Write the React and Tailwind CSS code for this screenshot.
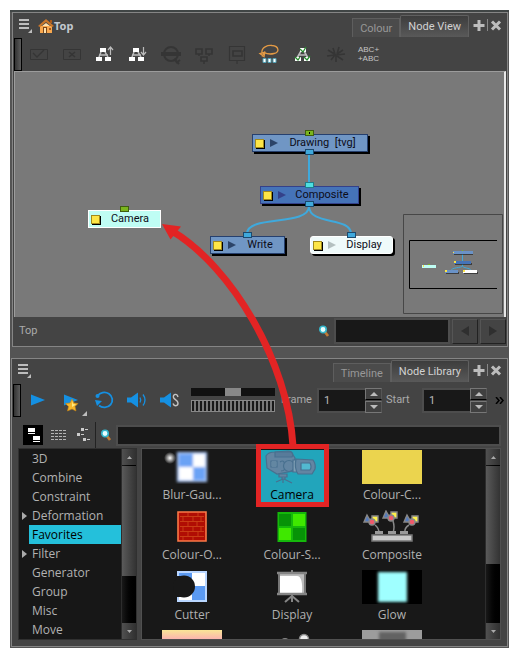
import React, { useState } from 'react';

const categories = [
    { name: '3D' },
    { name: 'Combine' },
    { name: 'Constraint' },
    { name: 'Deformation', nested: true },
    { name: 'Favorites' },
    { name: 'Filter', nested: true },
    { name: 'Generator' },
    { name: 'Group' },
    { name: 'Misc' },
    { name: 'Move' },
];

const graphNodes = [
    { name: 'Drawing  [tvg]', place: 'left-[237px] top-[62px] w-[116px]', look: 'bg-[#7096c4] border-[#26406e] shadow-[2px_2px_0_#000]', arrow: 'text-[#2c4468]', top: 'bg-[#7ab51d] border-[#3f5e10]', dot: true, bottom: true },
    { name: 'Composite', place: 'left-[245px] top-[114px] w-[99px]', look: 'bg-[#4573b8] border-[#34418a] shadow-[2px_2px_0_#000]', arrow: 'text-[#34418a]', top: 'bg-[#4fe0e0] border-[#1f7f8c]', bottom: true },
    { name: 'Write', place: 'left-[195px] top-[164px] w-[75px]', look: 'bg-[#7096c4] border-[#26406e] shadow-[2px_2px_0_#000]', arrow: 'text-[#2c4468]', top: 'bg-[#3fa9dc] border-[#1c4a6e]' },
    { name: 'Display', place: 'left-[295px] top-[164px] w-[83px]', look: 'bg-[#effafa] border-white rounded-[3px] shadow-[2px_2px_0_#000]', arrow: 'text-[#b4c0c0]', top: 'bg-[#3fa9dc] border-[#1c4a6e]' },
    { name: 'Camera', place: 'left-[73px] top-[138px] w-[73px]', look: 'bg-[#bffdf4] border-white', top: 'bg-[#7ab51d] border-[#3f5e10]' },
];

function MenuButton() {
    return (
        <button aria-label="View menu" className="w-4 h-4">
            <svg viewBox="0 0 16 16" className="w-4 h-4">
                <path d="M1 2h10M1 6h10M1 10h10" stroke="#bdbdbd" strokeWidth="2" />
                <path d="M14 11v4h-4z" fill="#bdbdbd" />
            </svg>
        </button>
    );
}

function Tabs({ back, front }) {
    return (
        <div className="ml-auto flex items-end self-stretch">
            <button className="h-[19px] px-[7px] bg-[#4b4b4b] border border-b-0 border-[#5e5e5e] text-[#989898] leading-[19px]">{back}</button>
            <button className="h-[22px] px-[7px] bg-linear-to-b from-[#3d3d3d] to-[#595959] border border-b-0 border-[#606060] rounded-t-[2px] text-[#d2d2d2] leading-[20px]">{front}</button>
            <button aria-label="Add view" className="ml-1 mb-1 w-3 h-4">
                <svg viewBox="0 0 12 16" className="w-3 h-4"><path d="M6 3v11M0.5 8.5h11" stroke="#bdbdbd" strokeWidth="3" /></svg>
            </button>
            <span className="w-px h-3 mb-[6px] ml-[2px] bg-[#888]" />
            <button aria-label="Close view" className="ml-[2px] mb-1 mr-1 w-3 h-4">
                <svg viewBox="0 0 12 16" className="w-3 h-4"><path d="M2 4.5l8 8M10 4.5l-8 8" stroke="#bdbdbd" strokeWidth="3" /></svg>
            </button>
        </div>
    );
}

function Handle() {
    return <div className="w-2 h-[33px] shrink-0 border border-black bg-linear-to-r from-[#333] to-[#5c5c5c]" />;
}

function Tool({ label, children }) {
    return (
        <button aria-label={label} className="w-[33px] h-[33px] shrink-0 flex items-center justify-center">
            <svg viewBox="0 0 24 24" width="24" height="24" fill="none">{children}</svg>
        </button>
    );
}

function Magnifier() {
    return (
        <svg viewBox="0 0 12 12" className="w-3 h-3 shrink-0">
            <path d="M7 7l3 4" stroke="#c07a35" strokeWidth="2.6" />
            <circle cx="5" cy="4.5" r="3.2" fill="#e9ffff" stroke="#35b7cc" strokeWidth="1.6" />
        </svg>
    );
}

function TreeBoxes() {
    return (
        <>
            <path d="M8 10l-2 5M12 10l3 5M6 13h9" stroke="#bbb" strokeWidth="1.5" />
            <path d="M7 6h6v4H7zM3 15h6v4H3zM12 15h6v4h-6z" fill="#fff" />
        </>
    );
}

function NodeToolbar() {
    return (
        <div className="flex items-center h-[34px]">
            <Handle />
            <Tool label="Enable">
                <path d="M3.5 7.5h17v10h-17z" stroke="#353535" />
                <path d="M6 11l4 4 7-7" stroke="#353535" strokeWidth="1.3" />
            </Tool>
            <Tool label="Disable">
                <path d="M3.5 7.5h17v10h-17z" stroke="#353535" />
                <path d="M9 10l6 5M15 10l-6 5" stroke="#353535" strokeWidth="1.6" />
            </Tool>
            <Tool label="Move up to parent">
                <TreeBoxes />
                <path d="M17.5 13V5M15 8l2.5-3 2.5 3" stroke="#bbb" strokeWidth="1.2" />
            </Tool>
            <Tool label="Enter group">
                <TreeBoxes />
                <path d="M17.5 5v8M15 10l2.5 3 2.5-3" stroke="#bbb" strokeWidth="1.2" />
            </Tool>
            <Tool label="Search">
                <circle cx="12" cy="12" r="7" stroke="#353535" strokeWidth="2" />
                <path d="M2 12h20" stroke="#353535" strokeWidth="4" />
                <path d="M15 17l5 5M17 21l4-3" stroke="#353535" strokeWidth="2" />
            </Tool>
            <Tool label="Group">
                <path d="M4 7h6v5H4zM14 7h6v5h-6zM9 15h6v4H9z" stroke="#353535" strokeWidth="1.6" />
                <path d="M7 12v2M17 12v2M12 19v3" stroke="#353535" strokeWidth="1.5" />
            </Tool>
            <Tool label="Backdrop">
                <path d="M4.5 4.5h15v14h-15zM12 18v4" stroke="#353535" strokeWidth="1.2" />
                <path d="M8 9h9v5H8z" stroke="#353535" strokeWidth="1.6" />
            </Tool>
            <Tool label="Lasso">
                <path d="M4 11C3 5 10 3 14 3.5c7 .5 8 7 2 8-4 1-8 0-10-1l-4 1 4 3 1-5-3 5" stroke="#e39a45" strokeWidth="1.3" />
                <path d="M5 16.5h3v4H5zM10 16.5h3v4h-3zM15 16.5h3v4h-3z" fill="#fff" stroke="#52a1b4" />
            </Tool>
            <Tool label="Enable all">
                <path d="M10 9l-4 7M13 9l4 7M7 13h9" stroke="#bbb" strokeWidth="1.6" />
                <path d="M9 6h6v4H9zM4 15h6v4H4zM13 15h6v4h-6z" fill="#fff" />
                <path d="M9 7l3 3 3-5M4 15l3 3 2-3M13 15l3 3 3-4" stroke="#268b2d" strokeWidth="1.3" />
            </Tool>
            <Tool label="Explode">
                <path d="M12 13L4 8M11 12L9 6M13 12l2-7M13 12l6-4M12 13l9-1M13 14l6 4M12 13v7M11 13l-4 5M11 13l-8 1" stroke="#353535" strokeWidth="1.6" />
            </Tool>
            <button className="w-[33px] shrink-0 text-[8px] leading-[9px] text-[#c4c4c4] font-['Liberation_Sans',sans-serif]">ABC+<br />+ABC</button>
        </div>
    );
}

function GraphNode({ node }) {
    return (
        <div className={`absolute h-[18px] border flex items-center leading-4 text-[#0d0d18] whitespace-pre ${node.place} ${node.look}`}>
            <span className={`absolute -top-[5px] left-1/2 -ml-[5px] w-[9px] h-[6px] border ${node.top}`}>
                {node.dot && <span className="absolute left-[3px] top-px w-px h-[2px] bg-black" />}
            </span>
            <span className="ml-[2px] w-[9px] h-[9px] shrink-0 bg-[#fde647] border border-[#a28a1c] shadow-[1px_1px_0_#000]" />
            {node.arrow && (
                <svg viewBox="0 0 8 8" className={`w-2 h-2 ml-[6px] shrink-0 ${node.arrow}`}><path d="M0 0l8 4-8 4z" fill="currentColor" /></svg>
            )}
            <span className="flex-1 text-center">{node.name}</span>
            {node.bottom && <span className="absolute -bottom-[4px] left-1/2 -ml-[5px] w-[9px] h-[6px] border bg-[#3fa9dc] border-[#1c4a6e]" />}
        </div>
    );
}

function MiniMap() {
    return (
        <svg viewBox="0 0 100 100" className="absolute right-[1px] bottom-[3px] w-[100px] h-[100px]" fill="none">
            <path d="M0.5 0.5h99v99h-99z" stroke="#474747" />
            <path d="M94 26.5H6.5v48H94" stroke="#000" />
            <path d="M59.5 40v12C59 54 48 53 48 57M59.5 52c0 2 8 2 8 4" stroke="#3fa9dc" />
            <path d="M51 40h19M52 50h17M43 59h13M61 59h14" stroke="#000" />
            <path d="M50 37h20v3H50zM42 56h13v3H42z" fill="#6a92c6" />
            <path d="M51 47h17v3H51z" fill="#4573b8" />
            <path d="M60 56h14v3H60z" fill="#fff" />
            <path d="M19 51h14v3H19z" fill="#bffdf4" />
            <path d="M51 47h2v2h-2zM42 56h2v2h-2zM60 56h2v2h-2zM20 51h1v2h-1zM50 38h1v1h-1z" fill="#fde647" />
            <path d="M25 50h2v1h-2zM59 36h1v1h-1z" fill="#7ab51d" />
        </svg>
    );
}

function NodeView() {
    return (
        <section className="mr-px border border-[#858585] bg-[#444] p-px">
            <div className="flex items-center h-[23px] pl-1">
                <MenuButton />
                <svg viewBox="0 0 16 16" className="w-4 h-4 ml-1">
                    <path d="M2 8h12v7H2z" fill="#f9a84e" />
                    <path d="M0 8l8-7 8 7-2 1-6-5-6 5z" fill="#c8762a" />
                    <path d="M5 9h4v6H5z" fill="#7a471a" />
                    <path d="M11 10h2v2h-2zM12 2h2v3h-2z" fill="#a85a1c" />
                    <path d="M6 10h2v5H6zM8 5l4 3H4z" fill="#ffe2ae" />
                </svg>
                <span className="font-bold font-['Noto_Sans',sans-serif] text-[#c3c8cf]">Top</span>
                <Tabs back="Colour" front="Node View" />
            </div>
            <NodeToolbar />
            <div className="relative h-[246px] overflow-hidden bg-[#797979] border-t border-l border-r-2 border-t-[#9c9c9c] border-l-[#9c9c9c] border-r-[#e8e8e8]">
                <svg className="absolute inset-0 w-full h-full" fill="none" stroke="#3fa9dc" strokeWidth="2">
                    <path d="M294 82v32M294 134C294 155 232 142 232 162M294 134c0 20 42 10 42 28" />
                </svg>
                {graphNodes.map(node => (
                    <GraphNode key={node.name} node={node} />
                ))}
                <MiniMap />
            </div>
            <div className="flex items-center h-7 pl-[5px]">
                <span className="text-[#aaa]">Top</span>
                <div className="ml-auto flex items-center">
                    <Magnifier />
                    <input aria-label="Search nodes" className="ml-1 w-[116px] h-[26px] bg-[#181818] border-2 border-[#4d4d4d]" />
                    <button aria-label="Previous" className="ml-[2px] w-[26px] h-[25px] flex items-center justify-center border border-t-[#555] border-l-[#555] border-b-[#222] border-r-[#222]">
                        <svg viewBox="0 0 8 10" className="w-2 h-[10px]"><path d="M8 0v10L0 5z" fill="#2f2f2f" /></svg>
                    </button>
                    <button aria-label="Next" className="ml-[2px] w-[26px] h-[25px] flex items-center justify-center border border-t-[#555] border-l-[#555] border-b-[#222] border-r-[#222]">
                        <svg viewBox="0 0 8 10" className="w-2 h-[10px]"><path d="M0 0v10l8-5z" fill="#2f2f2f" /></svg>
                    </button>
                </div>
            </div>
        </section>
    );
}

function Stepper({ id, label }) {
    const [value, setValue] = useState(1);
    return (
        <div className="flex items-center shrink-0">
            <label htmlFor={id} className="w-9 text-[#aaa]">{label}</label>
            <input id={id} value={value} onChange={e => setValue(Number(e.target.value) || 0)} className="w-12 h-[25px] pl-[5px] bg-[#181818] border-2 border-r-0 border-[#4d4d4d] text-[#bbb]" />
            <div className="flex flex-col">
                <button aria-label={`Increase ${label}`} onClick={() => setValue(value + 1)} className="w-[17px] h-3 flex items-center justify-center border border-[#777] border-r-[#555] border-b-black bg-[#404040]">
                    <svg viewBox="0 0 8 4" className="w-2 h-1"><path d="M0 4l4-4 4 4z" fill="#bbb" /></svg>
                </button>
                <button aria-label={`Decrease ${label}`} onClick={() => setValue(value - 1)} className="w-[17px] h-3 mt-px flex items-center justify-center border border-[#777] border-r-[#555] bg-[#404040]">
                    <svg viewBox="0 0 8 4" className="w-2 h-1"><path d="M0 0l4 4 4-4z" fill="#bbb" /></svg>
                </button>
            </div>
        </div>
    );
}

function PlaybackBar() {
    return (
        <div className="flex items-center h-[34px]">
            <Handle />
            <Tool label="Play">
                <path d="M5 6.5l14 5.5-14 5.5z" fill="#1590e2" />
            </Tool>
            <Tool label="Render and play">
                <path d="M5 6.5l14 5.5-14 5.5z" fill="#1590e2" />
                <path d="M13 11l2 4 4 .5-3 3 1 4.5-4-2-4.5 2 1-4.5-3-3 4.5-.5z" fill="#f6b72b" stroke="#c88414" strokeWidth=".6" />
                <path d="M13 13l1 3 3 .5-4 2.500z" fill="#ffea83" />
            </Tool>
            <svg viewBox="0 0 5 5" className="w-[5px] h-[5px] -ml-[5px] self-end mb-px"><path d="M5 0v5H0z" fill="#bdbdbd" /></svg>
            <Tool label="Loop">
                <path d="M5.5 8a8 7.5 0 1 1 1.5 9.5" stroke="#1590e2" strokeWidth="1.8" />
                <path d="M3 12l7 1-5 5z" fill="#1590e2" />
                <circle cx="5.5" cy="8" r="2" fill="#1590e2" />
            </Tool>
            <Tool label="Sound">
                <path d="M2 9.5h4l7-5v15l-7-5H2z" fill="#1590e2" />
                <path d="M15 9.5q1.5 2.5 0 5M18 6.5q4 5.5 0 11" stroke="#1590e2" strokeWidth="1.3" />
            </Tool>
            <Tool label="Sound scrubbing">
                <path d="M2 9.5h4l7-5v15l-7-5H2z" fill="#1590e2" />
                <path d="M20 9C19 5 14.5 6 15.5 9.5c.5 2 4.5 2.5 4.500 5.500 0 3.500-4 3.500-5 .5" stroke="#c3c3c3" strokeWidth="1.4" />
            </Tool>
            <div className="ml-[5px] flex-1 min-w-0 flex flex-col gap-1">
                <input type="range" aria-label="Jog" className="block w-full h-2 appearance-none bg-[#111] [&::-webkit-slider-thumb]:appearance-none [&::-webkit-slider-thumb]:w-4 [&::-webkit-slider-thumb]:h-2 [&::-webkit-slider-thumb]:bg-[#888]" />
                <div className="h-3 border border-[#888] bg-[repeating-linear-gradient(90deg,#181818_0_2px,#777_2px_4px)]" />
            </div>
            <div className="ml-[6px] flex gap-1">
                <Stepper id="frame" label="Frame" />
                <Stepper id="start" label="Start" />
            </div>
            <button aria-label="More tools" className="ml-2 mr-[2px]">
                <svg viewBox="0 0 9 7" className="w-[9px] h-[7px]" fill="none"><path d="M1 0l3 3.5-3 3.5M5 0l3 3.5-3 3.5" stroke="#000" strokeWidth="1.5" /></svg>
            </button>
        </div>
    );
}

function ScrollBar({ thumb }) {
    return (
        <div className="w-[15px] shrink-0 flex flex-col bg-linear-to-r from-[#191919] to-black border-l border-[#2d2d2d]">
            <button aria-label="Scroll up" className="h-4 flex items-center justify-center bg-linear-to-r from-[#505050] to-[#303030]">
                <svg viewBox="0 0 5 3" className="w-[5px] h-[3px]"><path d="M0 3l2.5-3L5 3z" fill="#aaa" /></svg>
            </button>
            <div className={`mt-px bg-linear-to-r from-[#5a5a5a] to-[#333] ${thumb}`} />
            <button aria-label="Scroll down" className="mt-auto h-4 flex items-center justify-center bg-linear-to-r from-[#505050] to-[#303030]">
                <svg viewBox="0 0 5 3" className="w-[5px] h-[3px]"><path d="M0 0l2.5 3L5 0z" fill="#aaa" /></svg>
            </button>
        </div>
    );
}

const library = [
    {
        name: 'Blur-Gau...',
        art: (
            <>
                <defs>
                    <filter id="soft"><feGaussianBlur stdDeviation="1.5" /></filter>
                    <radialGradient id="ball"><stop stopColor="#fff" /><stop offset="1" stopColor="#181818" /></radialGradient>
                </defs>
                <circle cx="8" cy="8" r="6" fill="url(#ball)" />
                <g filter="url(#soft)">
                    <path d="M15 2h30v30H15z" fill="#a9c8fb" />
                    <path d="M31 4h12v13H31zM17 17h14v13H17z" fill="#fff" />
                    <path d="M17 4h14v13H17zM31 17h12v13H31z" fill="#6aa2f5" />
                </g>
            </>
        ),
    },
    {
        name: 'Camera',
        selected: true,
        art: (
            <g fill="#6385a2" stroke="#48708f" strokeWidth="1.2">
                <path d="M4 6q2-4 9-4l13-1q4 0 5 4l2 3-2 13-16 3-10-6z" />
                <path d="M13 2h16q3 2 1 5H13z" fill="#587b9a" />
                <path d="M9 11h6v6H9z" fill="#7f9fb5" />
                <path d="M10 13h4M10 15h4M18 12q4-3 5 3t-4 6" />
                <circle cx="27" cy="16" r="5.5" />
                <path d="M31 10h4v12h-4z" fill="#7e9db3" />
                <path d="M34 9l17 1q3 4 2 9l-3 5H36q-4-6-2-15z" />
                <path d="M39 13h9q2 4 0 7H39z" fill="#52b9d0" />
                <path d="M17 24h8v3h-8zM20 27h3v2h-3zM21 29l-7 3M21 29v4M22 29l8 4" />
            </g>
        ),
    },
    { name: 'Colour-C...', art: <path d="M0 0h60v34H0z" fill="#ebd44e" /> },
    {
        name: 'Colour-O...',
        art: (
            <>
                <path d="M16 2h28v29H16z" fill="#b00d04" stroke="#fb7847" strokeWidth="1.6" />
                <path d="M18 6.5h24M18 11.5h24M18 16.5h24M18 21.5h24M18 26.5h24M26 3v3M36 3v3M21 7v4M31 7v4M39 7v4M26 12v4M35 12v4M21 17v4M31 17v4M39 17v4M26 22v4M36 22v4M21 27v3M31 27v3" stroke="#cf4a1b" strokeWidth=".8" />
            </>
        ),
    },
    {
        name: 'Colour-S...',
        art: (
            <>
                <path d="M15.5 2h29v30h-29z" fill="#15b80b" />
                <path d="M17 4h12v12H17zM31 18h12v12H31z" fill="#079307" />
                <path d="M31 4h12v12H31zM17 18h12v12H17z" fill="#3fe800" />
            </>
        ),
    },
    {
        name: 'Composite',
        art: (
            <>
                <path d="M13 15q4 3 4 8M31 11q2 6 0 12M47 15q-5 3-4 8" stroke="#888" strokeWidth="1.5" fill="none" />
                <path d="M13 21h8v3h-8zM26 21h8v3h-8zM38 21h8v3h-8z" fill="#999" />
                <path d="M10 25h40v6H10z" fill="#c9c9c9" stroke="#777" strokeWidth="1.5" />
                {[[0, 4], [19, 0], [40, 4]].map(([x, y]) => (
                    <g key={x} transform={`translate(${x} ${y})`} stroke="#888" strokeWidth="1.4">
                        <path d="M10 2h6v6h-6z" fill="#fff24a" />
                        <path d="M5 1l4 7H2z" fill="#537bbf" />
                        <circle cx="10" cy="8" r="3" fill="#ef5a6b" />
                    </g>
                ))}
            </>
        ),
    },
    {
        name: 'Cutter',
        art: (
            <>
                <path d="M16 2h28v29H16z" fill="#5b9af2" stroke="#b9d6ff" strokeWidth="2" />
                <path d="M30 3h13v13H30zM17 17h13v13H17z" fill="#fff" />
                <path d="M14 6h5v21h-5z" fill="#181818" />
                <circle cx="22" cy="16.5" r="11" fill="#181818" />
            </>
        ),
    },
    {
        name: 'Display',
        art: (
            <>
                <path d="M30 25v7M30 26l-7 6M30 26l7 6M30 0v3" stroke="#858585" strokeWidth="2" />
                <path d="M17 3h26v21H17z" fill="#bcbcbc" stroke="#777" strokeWidth="2" />
                <path d="M18 6h17q6 0 5 17H18z" fill="#fff" />
                <path d="M15 3h30M15 24h30" stroke="#858585" strokeWidth="2.5" />
            </>
        ),
    },
    {
        name: 'Glow',
        art: (
            <>
                <path d="M0 0h60v34H0z" fill="#000" />
                <path d="M16 2h29v30H16z" fill="#9fffff" filter="url(#soft)" />
            </>
        ),
    },
    {
        id: 'gradient',
        art: (
            <>
                <defs><linearGradient id="sunset" x2="0" y2="1"><stop stopColor="#f8e596" /><stop offset=".3" stopColor="#fbaeb2" /></linearGradient></defs>
                <path d="M0 0h60v34H0z" fill="url(#sunset)" />
            </>
        ),
    },
    {
        id: 'peg',
        art: (
            <>
                <circle cx="42" cy="9" r="4.5" fill="#eee" stroke="#888" strokeWidth="1.5" />
                <circle cx="23" cy="12" r="4" fill="#888" />
            </>
        ),
    },
    {
        id: 'shadow',
        art: (
            <>
                <path d="M0 0h60v34H0z" fill="#9c9c9c" />
                <path d="M17 2h27v30H17z" fill="#626262" filter="url(#soft)" />
            </>
        ),
    },
];

function NodeLibrary() {
    const [category, setCategory] = useState('Favorites');

    return (
        <section className="mt-[11px] -ml-px mr-px border border-[#858585] bg-[#444] px-px pb-[6px]">
            <div className="flex items-center h-[23px] pl-1">
                <MenuButton />
                <Tabs back="Timeline" front="Node Library" />
            </div>
            <div className="mt-px">
                <PlaybackBar />
            </div>
            <div className="mt-[5px] flex items-center h-[26px] pl-[10px] pr-[5px]">
                <button aria-label="Thumbnails" className="w-5 h-5 bg-black">
                    <svg viewBox="0 0 20 20" className="w-5 h-5"><path d="M5 3h7v4H5zM5 8h7v1H5zM10 11h7v4h-7zM10 16h7v1h-7z" fill="#fff" /></svg>
                </button>
                <button aria-label="List" className="ml-2 w-[15px] h-5">
                    <svg viewBox="0 0 15 20" className="w-[15px] h-5"><path d="M0 5.5h15M0 8.5h15M0 11.5h15M0 14.5h15" stroke="#b5b5b5" strokeDasharray="3 1" /></svg>
                </button>
                <button aria-label="Tree" className="ml-[10px] w-[15px] h-5">
                    <svg viewBox="0 0 15 20" className="w-[15px] h-5"><path d="M5 3h3v3H5zM1 8h3v3H1zM7 13h3v3H7zM9 4h3v1H9zM5 9h3v1H5zM11 14h3v1h-3z" fill="#ccc" /></svg>
                </button>
                <span className="ml-1 w-px h-[26px] bg-[#222]" />
                <span className="ml-1 flex"><Magnifier /></span>
                <input aria-label="Search library" className="ml-1 flex-1 min-w-0 h-[21px] bg-[#181818] border-2 border-[#4d4d4d]" />
            </div>
            <div className="flex h-[192px] pl-[5px] pr-[5px] font-['Open_Sans',sans-serif]">
                <div className="w-[119px] shrink-0 flex bg-[#171717] border border-[#303030]">
                    <ul className="flex-1 min-w-0">
                        {categories.map(item => (
                            <li key={item.name} className="flex items-center h-[19px]">
                                <span className="w-[10px] pl-[3px] shrink-0">
                                    {item.nested && <svg viewBox="0 0 5 8" className="w-[5px] h-2"><path d="M0 0l5 4-5 4z" fill="#aaa" /></svg>}
                                </span>
                                <button
                                    onClick={() => setCategory(item.name)}
                                    className={category === item.name ? 'flex-1 h-[19px] pl-[3px] text-left text-xs bg-[#24c0db] text-black' : 'flex-1 h-[19px] pl-[3px] text-left text-xs text-[#b2b2b2]'}
                                >
                                    {item.name}
                                </button>
                            </li>
                        ))}
                    </ul>
                    <ScrollBar thumb="h-[110px]" />
                </div>
                <div className="ml-1 flex-1 min-w-0 flex bg-[#181818] border border-[#505050]">
                    <div className="flex-1 min-w-0 h-full overflow-hidden pt-px grid grid-cols-[repeat(auto-fill,100px)] auto-rows-[60px]">
                        {library.map(item => (
                            <button key={item.name || item.id} aria-label={item.name || item.id} className={item.selected ? 'h-[56px] w-[68px] mx-auto flex flex-col items-center bg-[#22a5bb] text-black' : 'h-[56px] flex flex-col items-center text-[#b0b0b0]'}>
                                <svg viewBox="0 0 60 34" className="w-[60px] h-[34px] shrink-0">{item.art}</svg>
                                {item.name && <span className="text-xs leading-[22px]">{item.name}</span>}
                            </button>
                        ))}
                    </div>
                    <ScrollBar thumb="h-[98px]" />
                </div>
            </div>
        </section>
    );
}

export default function App() {
    return (
        <main className="bg-white p-[10px] text-[11px] leading-4 font-['Roboto',sans-serif]">
            <div className="relative bg-[#545454] border-t-2 border-[#404545] pl-[2px] pb-px">
                <NodeView />
                <NodeLibrary />
                {/* arrow from the library thumbnail to the node dropped in the view */}
                <svg viewBox="0 0 340 520" className="absolute left-0 top-0 w-[340px] h-[520px] pointer-events-none" fill="none">
                    <path d="M162 219C222 255 278 350 283 434" stroke="#e22424" strokeWidth="7" />
                    <path d="M152 212l19 2.500-10.500 13z" fill="#e22424" />
                    <path d="M248.500 434.500h68v58h-68z" stroke="#e22424" strokeWidth="5" />
                </svg>
            </div>
        </main>
    );
}
